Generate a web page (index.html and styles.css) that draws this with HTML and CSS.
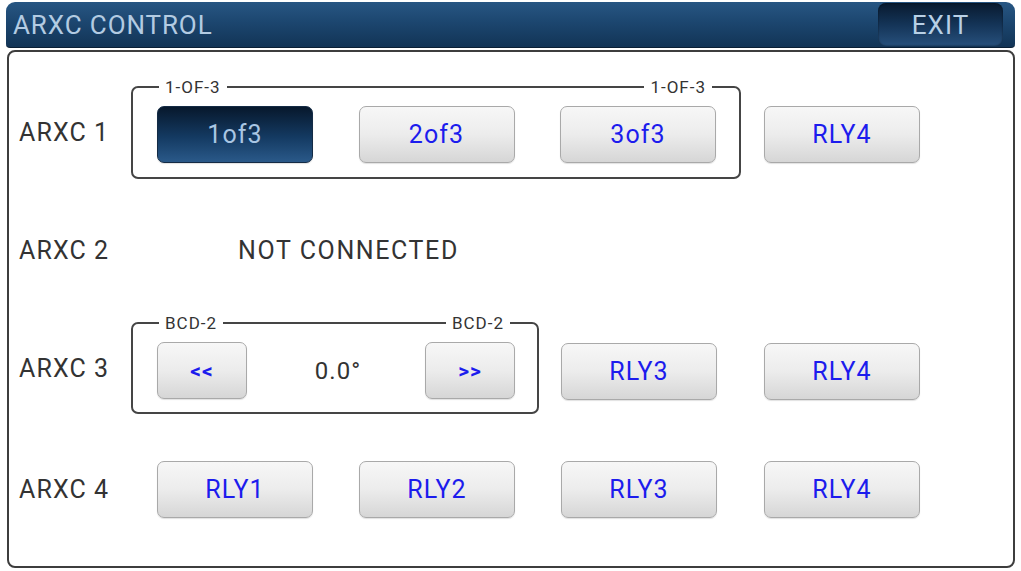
FILE: index.html
```html
<!DOCTYPE html>
<html>
<head>
<meta charset="utf-8">
<link rel="stylesheet" href="styles.css">
</head>
<body>
<div class="screen">
  <header class="titlebar">
    <div class="title">ARXC CONTROL</div>
    <button class="exit">EXIT</button>
  </header>
  <main class="panel">
    <div class="row row1">
      <div class="label">ARXC 1</div>
      <div class="group group1">
        <span class="legend legend-left">1-OF-3</span>
        <span class="legend legend-right">1-OF-3</span>
        <button class="btn btn-active">1of3</button>
        <button class="btn">2of3</button>
        <button class="btn">3of3</button>
      </div>
      <button class="btn btn-out">RLY4</button>
    </div>
    <div class="row row2">
      <div class="label">ARXC 2</div>
      <div class="status">NOT CONNECTED</div>
    </div>
    <div class="row row3">
      <div class="label">ARXC 3</div>
      <div class="group group3">
        <span class="legend legend-left">BCD-2</span>
        <span class="legend legend-right">BCD-2</span>
        <button class="btn btn-small">&lt;&lt;</button>
        <div class="angle">0.0°</div>
        <button class="btn btn-small">&gt;&gt;</button>
      </div>
      <button class="btn btn-out3">RLY3</button>
      <button class="btn btn-out3 btn-last">RLY4</button>
    </div>
    <div class="row row4">
      <div class="label">ARXC 4</div>
      <div class="btns4">
        <button class="btn">RLY1</button>
        <button class="btn">RLY2</button>
        <button class="btn">RLY3</button>
        <button class="btn">RLY4</button>
      </div>
    </div>
  </main>
</div>
</body>
</html>
```

FILE: styles.css
```css
* { box-sizing: border-box; }
html, body {
  margin: 0;
  padding: 0;
  background: #ffffff;
  font-family: Roboto, "Liberation Sans", sans-serif;
}
.screen {
  width: 1021px;
  height: 571px;
  padding: 2px 6px 3px 6px;
  display: flex;
  flex-direction: column;
}
.titlebar {
  height: 46px;
  border-radius: 9px 9px 4px 4px;
  background: linear-gradient(#275683 0%, #1c466f 45%, #123456 100%);
  border-bottom: 1px solid #0a1f35;
  display: flex;
  align-items: stretch;
  justify-content: space-between;
  padding: 1px 12px 1px 7px;
}
.title {
  color: #b3cbe2;
  font-size: 26px;
  line-height: 44px;
  letter-spacing: 0.9px;
}
.exit {
  width: 125px;
  border: none;
  border-radius: 8px;
  background: linear-gradient(#081a2f 0%, #143457 50%, #27507c 100%);
  color: #b8d0e6;
  font-family: Roboto, "Liberation Sans", sans-serif;
  font-size: 26px;
  letter-spacing: 1px;
  padding: 0;
  box-shadow: inset 0 0 2px rgba(0,0,0,0.6);
}
.panel {
  flex: 1;
  margin: 2px 0 0 1px;
  border: 2px solid #3d3d3d;
  border-radius: 8px;
  background: #fff;
  padding: 34px 0 0 10px;
  display: flex;
  flex-direction: column;
}
.row {
  display: flex;
  align-items: center;
}
.label {
  width: 112px;
  flex: none;
  color: #333;
  font-size: 25px;
  letter-spacing: 1.1px;
}
.group {
  position: relative;
  border: 2px solid #454545;
  border-radius: 7px;
  display: flex;
  align-items: center;
}
.group1 {
  width: 610px;
  height: 93px;
  padding: 4px 23px 0 24px;
  justify-content: space-between;
}
.group3 {
  width: 408px;
  height: 92px;
  padding: 5px 22px 0 24px;
  justify-content: space-between;
}
.legend {
  position: absolute;
  top: -11px;
  background: #fff;
  padding: 0 6px;
  font-size: 17px;
  line-height: 20px;
  color: #333;
  letter-spacing: 1px;
}
.legend-left { left: 26px; }
.legend-right { right: 27px; }
.btn {
  width: 156px;
  height: 57px;
  border: 1.5px solid #a9a9a9;
  border-radius: 7px;
  background: linear-gradient(#f7f7f7 0%, #ececec 50%, #d6d6d6 100%);
  color: #1c1ced;
  font-family: Roboto, "Liberation Sans", sans-serif;
  font-size: 25px;
  letter-spacing: 1.1px;
  padding: 0;
  box-shadow: 0 1px 1px rgba(0,0,0,0.12);
}
.btn-active {
  background: linear-gradient(#07182c 0%, #143a62 55%, #2a5989 100%);
  border-color: #142b45;
  color: #a9c6e3;
}
.btn-small {
  width: 90px;
  height: 57px;
  font-size: 21px;
  font-weight: bold;
  letter-spacing: 1px;
}
.angle {
  font-size: 24px;
  letter-spacing: 1px;
  color: #333;
  margin-left: 4px;
}
.btn-out {
  margin-left: 23px;
  margin-top: 4px;
}
.btn-out3 {
  margin-left: 22px;
  align-self: flex-start;
  margin-top: 21px;
}
.btn-last { margin-left: 47px; }
.row2 {
  height: 44px;
  margin-top: 49px;
}
.status {
  margin-left: 107px;
  font-size: 25px;
  color: #333;
  letter-spacing: 1.6px;
}
.row3 { margin-top: 50px; }
.row4 { margin-top: 47px; }
.btns4 {
  margin-left: 26px;
  display: flex;
  gap: 46px;
}
.btns4 .btn:nth-child(4) { margin-left: 1px; }
```
